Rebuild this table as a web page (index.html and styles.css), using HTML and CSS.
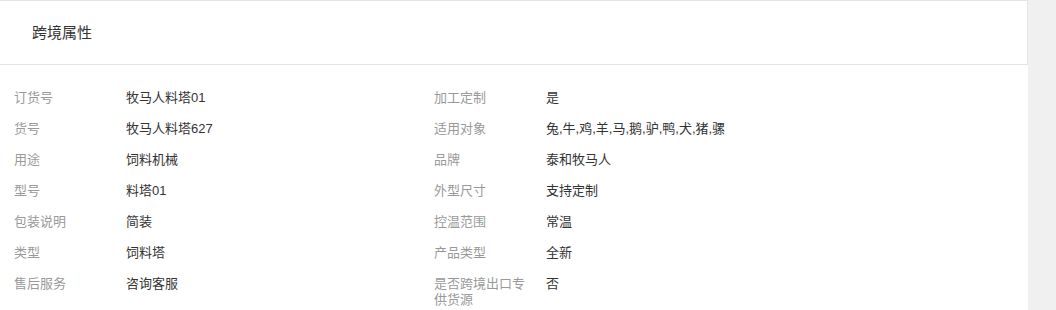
FILE: index.html
```html
<!DOCTYPE html>
<html lang="zh-CN">
<head>
<meta charset="utf-8">
<title>跨境属性</title>
<link rel="stylesheet" href="styles.css">
</head>
<body>
<div class="layout">
  <main class="panel">
    <header class="panel-head">
      <h2 class="panel-title">跨境属性</h2>
    </header>
    <section class="attr-grid">
      <div class="attr"><span class="attr-key">订货号</span><span class="attr-val">牧马人料塔01</span></div>
      <div class="attr"><span class="attr-key">加工定制</span><span class="attr-val">是</span></div>
      <div class="attr"><span class="attr-key">货号</span><span class="attr-val">牧马人料塔627</span></div>
      <div class="attr"><span class="attr-key">适用对象</span><span class="attr-val">兔,牛,鸡,羊,马,鹅,驴,鸭,犬,猪,骡</span></div>
      <div class="attr"><span class="attr-key">用途</span><span class="attr-val">饲料机械</span></div>
      <div class="attr"><span class="attr-key">品牌</span><span class="attr-val">泰和牧马人</span></div>
      <div class="attr"><span class="attr-key">型号</span><span class="attr-val">料塔01</span></div>
      <div class="attr"><span class="attr-key">外型尺寸</span><span class="attr-val">支持定制</span></div>
      <div class="attr"><span class="attr-key">包装说明</span><span class="attr-val">简装</span></div>
      <div class="attr"><span class="attr-key">控温范围</span><span class="attr-val">常温</span></div>
      <div class="attr"><span class="attr-key">类型</span><span class="attr-val">饲料塔</span></div>
      <div class="attr"><span class="attr-key">产品类型</span><span class="attr-val">全新</span></div>
      <div class="attr"><span class="attr-key">售后服务</span><span class="attr-val">咨询客服</span></div>
      <div class="attr"><span class="attr-key">是否跨境出口专供货源</span><span class="attr-val">否</span></div>
    </section>
  </main>
  <aside class="side"></aside>
</div>
</body>
</html>
```

FILE: styles.css
```css
html, body {
  margin: 0;
  padding: 0;
  height: 100%;
}

body {
  font-family: "Liberation Sans", "Noto Sans CJK SC", sans-serif;
  color: #333;
  background: #fff;
}

.layout {
  display: flex;
  min-height: 100%;
}

.panel {
  width: 1028px;
  flex: none;
  background: #fff;
}

.side {
  flex: 1;
  background: #f0f0f0;
}

.panel-head {
  height: 63px;
  border-top: 1px solid #e3e3e3;
  border-bottom: 1px solid #e3e3e3;
  border-right: 1px solid #e3e3e3;
  display: flex;
  align-items: center;
  padding-left: 32px;
}

.panel-title {
  margin: 0;
  font-size: 15px;
  font-weight: normal;
  line-height: 16px;
  color: #333;
}

.attr-grid {
  display: grid;
  grid-template-columns: 420px 420px;
  padding: 18px 14px 0;
}

.attr {
  display: flex;
  align-items: flex-start;
  padding: 7px 0 8px;
  font-size: 13px;
  line-height: 16px;
}

.attr-key {
  flex: none;
  width: 100px;
  margin-right: 12px;
  color: #999;
}

.attr-val {
  flex: 1;
  color: #333;
}
```
